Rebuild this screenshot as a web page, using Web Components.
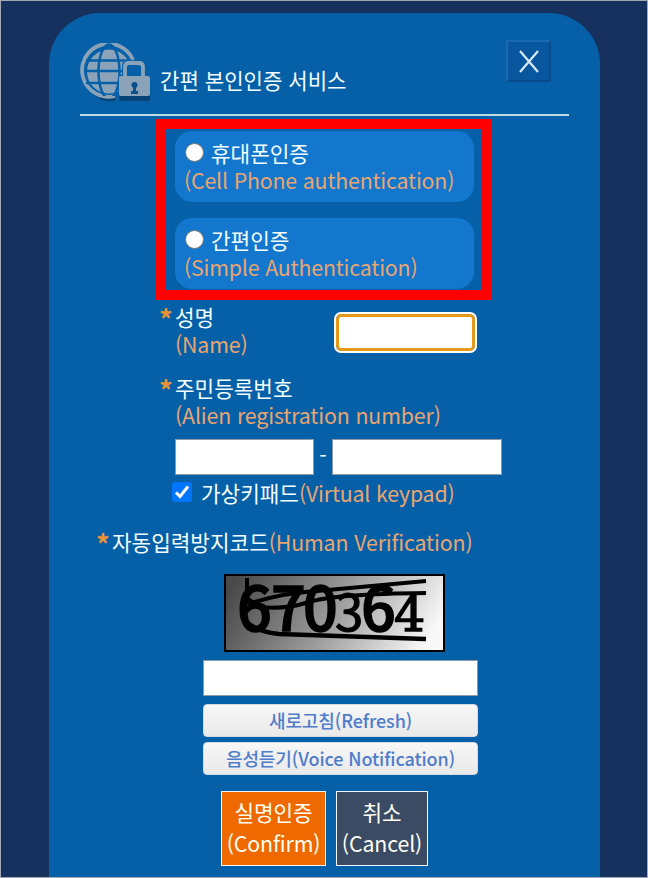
<!DOCTYPE html>
<html lang="ko">
<head>
<meta charset="UTF-8">
<title>간편 본인인증 서비스</title>
<style>
    html, body {
        margin: 0;
        height: 100%;
    }
    body {
        box-sizing: border-box;
        border: 1px solid #a3a8b3;
        background: #17315f;
        overflow: hidden;
        color: #f4ffff;
        font-family: "Noto Sans CJK KR", "Noto Sans", sans-serif;
        font-size: 21.3px;
        line-height: 27px;
        --accent: #e9a570;
    }
</style>
</head>
<body>
<auth-panel>
    <auth-header slot="header">간편 본인인증 서비스</auth-header>
    <method-group>
        <auth-method label="휴대폰인증" sub="(Cell Phone authentication)"></auth-method>
        <auth-method label="간편인증" sub="(Simple Authentication)"></auth-method>
    </method-group>
    <name-row></name-row>
    <id-row></id-row>
    <human-check></human-check>
    <action-bar>
        <action-button kind="confirm" label="실명인증" sub="(Confirm)"></action-button>
        <action-button kind="cancel" label="취소" sub="(Cancel)"></action-button>
    </action-bar>
</auth-panel>

<script>
/**
 * Small base class: each element only declares its template.
 */
class BaseElement extends HTMLElement {
    constructor() {
        super();
        this.attachShadow({ mode: 'open' });
    }

    connectedCallback() {
        this.shadowRoot.innerHTML = this.template();
    }

    attr(name) {
        return this.getAttribute(name) || '';
    }
}

class AuthPanel extends BaseElement {
    template() {
        return `
            <style>
                :host {
                    display: flex;
                    flex-direction: column;
                    box-sizing: border-box;
                    width: 551px;
                    height: 900px;
                    margin: 12px 0 0 48px;
                    border-radius: 51px 51px 0 0;
                    background: #0560a8;
                }
            </style>
            <slot name="header"></slot>
            <slot></slot>
        `;
    }
}

class AuthHeader extends BaseElement {
    template() {
        return `
            <style>
                :host {
                    display: flex;
                    box-sizing: border-box;
                    width: 489px;
                    height: 103px;
                    margin-left: 31px;
                    border-bottom: 2px solid #b9dce4;
                }
                .logo {
                    margin-top: 30px;
                    width: 72px;
                    height: 62px;
                }
                h1 {
                    flex: 1;
                    margin: 54px 0 0 8px;
                    font-size: 21.1px;
                    font-weight: 400;
                }
                button {
                    box-sizing: border-box;
                    width: 45px;
                    height: 42px;
                    margin: 27px 18px 0 0;
                    padding: 0;
                    border: 2px solid;
                    border-color: #1b69b0 #064b8b #064b8b #1b69b0;
                    background: #08569d;
                }
                button svg {
                    display: block;
                    margin: auto;
                }
            </style>
            <svg class="logo" viewBox="0 0 72 62">
                <path d="M13 51Q22 60 35 58V53Z" fill="#064477"/>
                <rect x="39" y="52" width="31" height="6" rx="2" fill="#064477"/>
                <path d="M53 17A26.500 26.500 0 1 0 35 53" fill="none" stroke="#8ba3b8" stroke-width="3.800"/>
                <clipPath id="globe"><path d="M0 0H72V17H46Q42 18 42 23V31L38 34V53H0Z"/></clipPath>
                <g clip-path="url(#globe)">
                    <circle cx="29" cy="28.500" r="22" fill="#8ba3b8"/>
                    <g fill="none" stroke="#0560a8" stroke-width="2.500">
                        <ellipse cx="29" cy="28.500" rx="10.500" ry="27"/>
                        <path d="M6 17.500H52M6 28H52M6 40H52"/>
                    </g>
                </g>
                <path d="M45 34V24Q45 20 49 20H59Q63 20 63 24V34" fill="none" stroke="#8ba3b8" stroke-width="3.800"/>
                <rect x="39" y="33" width="31" height="20" rx="2" fill="#8ba3b8"/>
                <circle cx="54.500" cy="42" r="3" fill="#0a518c"/>
                <path d="M53 42H56V48H58V51H51V48H53Z" fill="#0a518c"/>
            </svg>
            <h1><slot></slot></h1>
            <button aria-label="닫기">
                <svg width="22" height="24" viewBox="0 0 22 24">
                    <path d="M2 2 20 23M20 2 2 23" stroke="#d7e9f4" stroke-width="2.200" fill="none"/>
                </svg>
            </button>
        `;
    }
}

class MethodGroup extends BaseElement {
    template() {
        return `
            <style>
                :host {
                    display: flex;
                    flex-direction: column;
                    gap: 16px;
                    box-sizing: border-box;
                    width: 336px;
                    height: 181px;
                    margin: 3px 0 0 107px;
                    padding: 2px 8px 0 9px;
                    border: 10px solid #ff0000;
                }
            </style>
            <slot></slot>
        `;
    }
}

class AuthMethod extends BaseElement {
    template() {
        return `
            <style>
                :host {
                    display: block;
                    box-sizing: border-box;
                    height: 71px;
                    width: 299px;
                    padding: 8px 0 0 10px;
                    border-radius: 17px;
                    background: #1277cd;
                }
                label {
                    display: flex;
                }
                .dot {
                    box-sizing: border-box;
                    width: 19px;
                    height: 19px;
                    margin: 4px 7px 0 0;
                    border: 1px solid #777;
                    border-radius: 50%;
                    background: #fff;
                }
                .sub {
                    margin-left: -1px;
                    color: var(--accent);
                    letter-spacing: -0.16px;
                }
            </style>
            <label><span class="dot"></span><span>${this.attr('label')}</span></label>
            <div class="sub">${this.attr('sub')}</div>
        `;
    }
}

class FieldLabel extends BaseElement {
    template() {
        const sub = this.attr('sub');
        return `
            <style>
                :host {
                    display: flex;
                }
                .star {
                    width: 16px;
                    height: 27px;
                    color: #e8923a;
                    font-size: 27px;
                    font-weight: 700;
                    line-height: 32px;
                }
                .sub {
                    color: var(--accent);
                    letter-spacing: -0.12px;
                }
            </style>
            <span class="star">*</span>
            <div>
                <slot></slot>${this.hasAttribute('inline') ? `<span class="sub">${sub}</span>` : `<div class="sub">${sub}</div>`}
            </div>
        `;
    }
}

class NameRow extends BaseElement {
    template() {
        return `
            <style>
                :host {
                    display: flex;
                    height: 71px;
                    margin: 3px 0 0 110px;
                }
                field-label {
                    width: 177px;
                }
                /* focus ring: white line, amber line, white field */
                input {
                    box-sizing: border-box;
                    width: 139px;
                    height: 37px;
                    margin: 11px 0 0;
                    border: 3px solid #e39a18;
                    border-radius: 5px;
                    outline: 2px solid #fff;
                    background: #fff;
                }
            </style>
            <field-label sub="(Name)">성명</field-label>
            <input type="text">
        `;
    }
}

class IdRow extends BaseElement {
    template() {
        return `
            <style>
                :host {
                    display: block;
                    margin-left: 110px;
                }
                .numbers {
                    display: flex;
                    margin: 11px 0 0 16px;
                }
                input {
                    box-sizing: border-box;
                    width: 139px;
                    height: 36px;
                    border: 1px solid #8d9aa8;
                    background: #fff;
                }
                input.back {
                    width: 170px;
                }
                .dash {
                    width: 18px;
                    line-height: 31px;
                    text-align: center;
                }
                .keypad {
                    display: flex;
                    margin: 4px 0 0 13px;
                }
                .check {
                    width: 20px;
                    height: 20px;
                    margin: 3px 9px 0 0;
                    border-radius: 3px;
                    background: #0275ff;
                }
                .check svg {
                    display: block;
                }
                .sub {
                    color: var(--accent);
                    letter-spacing: -0.16px;
                }
            </style>
            <field-label sub="(Alien registration number)">주민등록번호</field-label>
            <div class="numbers">
                <input type="text"><span class="dash">-</span><input class="back" type="text">
            </div>
            <label class="keypad">
                <span class="check">
                    <svg width="20" height="20" viewBox="0 0 20 20">
                        <path d="M4 10.500 8 14.500 16 4.500" fill="none" stroke="#fff" stroke-width="3"/>
                    </svg>
                </span>
                <span>가상키패드<span class="sub">(Virtual keypad)</span></span>
            </label>
        `;
    }
}

class CaptchaImage extends BaseElement {
    template() {
        return `
            <style>
                :host {
                    display: block;
                }
                svg {
                    display: block;
                }
                text {
                    font-family: "Noto Sans CJK KR", sans-serif;
                    font-size: 61px;
                    font-weight: 500;
                    stroke: #000;
                    stroke-width: 1.5px;
                }
                .thin {
                    font-size: 51px;
                    font-weight: 400;
                    stroke-width: 1px;
                }
                .serif {
                    font-family: "DejaVu Serif", serif;
                    font-size: 49px;
                    font-weight: 400;
                }
            </style>
            <svg width="221" height="78" viewBox="0 0 221 78">
                <defs>
                    <linearGradient id="shade" x1="0" y1="0.300" x2="1" y2="0.500">
                        <stop offset="0" stop-color="#494949"/>
                        <stop offset="0.500" stop-color="#999"/>
                        <stop offset="1" stop-color="#f8f8f8"/>
                    </linearGradient>
                </defs>
                <rect x="1" y="1" width="219" height="76" fill="url(#shade)" stroke="#000" stroke-width="2"/>
                <text y="57"><tspan x="13 47 79">670</tspan><tspan class="thin" x="111">3</tspan><tspan x="137">6</tspan><tspan class="serif" x="170">4</tspan></text>
                <g fill="none" stroke="#000">
                    <path d="M23 4V24L35 33Q60 36 85 28T202 19" stroke-width="4"/>
                    <path d="M24 30Q58 19 93 17L202 7" stroke-width="4"/>
                    <path d="M22 22Q15 39 25 50Q35 58 55 60L202 65" stroke-width="4.500"/>
                </g>
            </svg>
        `;
    }
}

class HumanCheck extends BaseElement {
    template() {
        return `
            <style>
                :host {
                    display: block;
                    margin-top: 22px;
                }
                field-label {
                    margin-left: 47px;
                }
                captcha-image {
                    margin: 19px 0 8px 175px;
                }
                .stack {
                    display: flex;
                    flex-direction: column;
                    width: 275px;
                    margin-left: 154px;
                }
                input {
                    box-sizing: border-box;
                    width: 275px;
                    height: 36px;
                    margin: 0 0 8px;
                    border: 1px solid #8d9aa8;
                    background: #fff;
                }
                button {
                    box-sizing: border-box;
                    height: 33px;
                    margin: 0 0 5px;
                    padding: 0;
                    border: 1px solid #d3dbe3;
                    border-radius: 4px;
                    background: linear-gradient(#f7f7f7, #e9e9e9);
                    color: #4f7ccb;
                    font: 500 18px/29px "Noto Sans CJK KR", sans-serif;
                    letter-spacing: -0.08px;
                }
            </style>
            <field-label inline sub="(Human Verification)">자동입력방지코드</field-label>
            <captcha-image></captcha-image>
            <div class="stack">
                <input type="text">
                <button>새로고침(Refresh)</button>
                <button>음성듣기(Voice Notification)</button>
            </div>
        `;
    }
}

class ActionBar extends BaseElement {
    template() {
        return `
            <style>
                :host {
                    display: flex;
                    gap: 10px;
                    margin: 11px 0 0 172px;
                }
            </style>
            <slot></slot>
        `;
    }
}

class ActionButton extends BaseElement {
    template() {
        const confirm = this.attr('kind') === 'confirm';
        return `
            <style>
                :host {
                    display: block;
                }
                button {
                    box-sizing: border-box;
                    width: ${confirm ? 105 : 92}px;
                    height: 75px;
                    padding: 0 0 4px;
                    border: 1px solid #f2f8ff;
                    background: ${confirm ? '#ee6900' : '#3a4b63'};
                    color: #fffff4;
                    font: inherit;
                    line-height: 31px;
                    letter-spacing: -0.1px;
                    white-space: nowrap;
                }
                span {
                    display: block;
                }
            </style>
            <button><span>${this.attr('label')}</span><span>${this.attr('sub')}</span></button>
        `;
    }
}

customElements.define('auth-panel', AuthPanel);
customElements.define('auth-header', AuthHeader);
customElements.define('method-group', MethodGroup);
customElements.define('auth-method', AuthMethod);
customElements.define('field-label', FieldLabel);
customElements.define('name-row', NameRow);
customElements.define('id-row', IdRow);
customElements.define('captcha-image', CaptchaImage);
customElements.define('human-check', HumanCheck);
customElements.define('action-bar', ActionBar);
customElements.define('action-button', ActionButton);
</script>
</body>
</html>
